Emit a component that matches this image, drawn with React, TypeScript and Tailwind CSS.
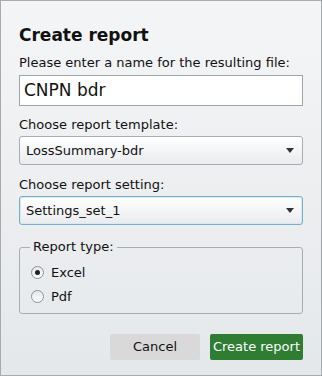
import React from 'react';

function Select({ value, focused }: { value: string; focused?: boolean }) {
  return (
    <div
      className={`flex h-[29px] items-center justify-between rounded-[3px] border bg-gradient-to-b from-[#ffffff] to-[#e9ebee] pl-[6px] pr-[8px] text-[13px] text-[#111] ${
        focused ? 'border-[#78aec8] shadow-[inset_0_0_0_1px_#d6eaf4]' : 'border-[#a9adb3]'
      }`}
    >
      <span>{value}</span>
      <svg width="8" height="5" viewBox="0 0 8 5">
        <path d="M0 0h8L4 5z" fill="#333" />
      </svg>
    </div>
  );
}

function Radio({ label, checked }: { label: string; checked?: boolean }) {
  return (
    <div className="flex items-center gap-[7px] text-[13px] text-[#111]">
      <span className="flex h-[13px] w-[13px] items-center justify-center rounded-full border border-[#8e9399] bg-gradient-to-b from-[#e4e6e9] to-[#ffffff]">
        {checked && <span className="h-[5px] w-[5px] rounded-full bg-[#222]" />}
      </span>
      <span>{label}</span>
    </div>
  );
}

export default function App() {
  return (
    <div
      className="h-[376px] w-[322px] border border-[#a6abb1] bg-gradient-to-b from-[#f4f5f6] to-[#e5e8eb] px-[18px]"
      style={{ fontFamily: '"DejaVu Sans", Verdana, sans-serif' }}
    >
      <h2 className="pt-[23px] text-[17px] font-bold leading-[22px] text-[#111]">Create report</h2>

      <label className="mt-[9px] block text-[13px] leading-[16px] text-[#111]">
        Please enter a name for the resulting file:
      </label>
      <div className="mt-[4px] flex h-[31px] items-center border border-[#9fa4aa] bg-white px-[4px] text-[17px] text-[#111]">
        CNPN bdr
      </div>

      <label className="mt-[11px] block text-[13px] leading-[16px] text-[#111]">Choose report template:</label>
      <div className="mt-[3px]">
        <Select value="LossSummary-bdr" />
      </div>

      <label className="mt-[12px] block text-[13px] leading-[16px] text-[#111]">Choose report setting:</label>
      <div className="mt-[3px]">
        <Select value="Settings_set_1" focused />
      </div>

      <fieldset className="mt-[14px] h-[75px] rounded-[3px] border border-[#a9adb3] px-[10px] pt-[8px]">
        <legend className="px-[3px] text-[13px] leading-[16px] text-[#111]">Report type:</legend>
        <div className="flex flex-col gap-[4px] pl-[1px]">
          <Radio label="Excel" checked />
          <Radio label="Pdf" />
        </div>
      </fieldset>

      <div className="mt-[20px] flex justify-end gap-[10px]">
        <button className="h-[26px] w-[90px] rounded-[2px] bg-[#d9d9d9] text-[13px] text-[#111]">Cancel</button>
        <button className="h-[26px] w-[93px] rounded-[2px] bg-[#2e7d32] text-[13px] text-white">Create report</button>
      </div>
    </div>
  );
}
